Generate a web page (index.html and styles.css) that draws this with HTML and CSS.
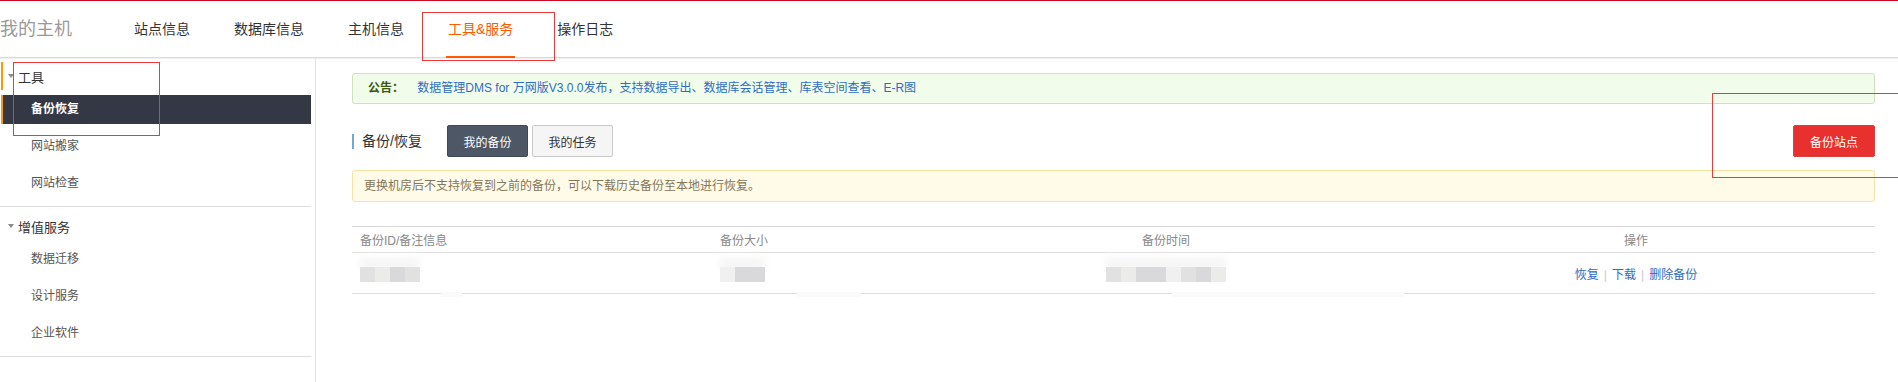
FILE: index.html
```html
<!DOCTYPE html>
<html lang="zh-CN">
<head>
    <meta charset="UTF-8">
    <meta name="viewport" content="width=device-width, initial-scale=1.0">
    <title>我的主机 - 工具&amp;服务</title>
    <link rel="stylesheet" href="styles.css">
</head>
<body>
    <div class="header">
        <div class="brand">我的主机</div>
        <ul class="nav">
            <li>站点信息</li>
            <li>数据库信息</li>
            <li>主机信息</li>
            <li class="active">工具&amp;服务</li>
            <li>操作日志</li>
        </ul>
    </div>

    <div class="layout">
        <aside class="sidebar">
            <div class="group current">
                <div class="group-title"><span class="caret"></span>工具</div>
                <a class="item active">备份恢复</a>
                <a class="item">网站搬家</a>
                <a class="item">网站检查</a>
            </div>
            <div class="group">
                <div class="group-title"><span class="caret"></span>增值服务</div>
                <a class="item">数据迁移</a>
                <a class="item">设计服务</a>
                <a class="item">企业软件</a>
            </div>
        </aside>

        <main class="content">
            <div class="notice">
                <b>公告：</b>
                <a>数据管理DMS for 万网版V3.0.0发布，支持数据导出、数据库会话管理、库表空间查看、E-R图</a>
            </div>

            <div class="section-bar">
                <h3 class="section-title">备份/恢复</h3>
                <div class="tabs">
                    <button class="tab active">我的备份</button>
                    <button class="tab">我的任务</button>
                </div>
                <button class="btn-danger">备份站点</button>
            </div>

            <div class="alert">更换机房后不支持恢复到之前的备份，可以下载历史备份至本地进行恢复。</div>

            <div class="table-wrap">
                <table class="backup-table">
                    <thead>
                        <tr>
                            <th class="col-id">备份ID/备注信息</th>
                            <th class="col-size">备份大小</th>
                            <th class="col-time">备份时间</th>
                            <th class="col-ops">操作</th>
                        </tr>
                    </thead>
                    <tbody>
                        <tr>
                            <td>
                                <span class="blur">
                                    <i class="b2"></i><i class="b3"></i><i class="b1"></i><i class="b2"></i>
                                </span>
                            </td>
                            <td>
                                <span class="blur">
                                    <i class="b4"></i><i class="b1"></i><i class="b1"></i>
                                </span>
                            </td>
                            <td class="center">
                                <span class="blur">
                                    <i class="b2"></i><i class="b3"></i><i class="b1"></i><i class="b1"></i><i class="b4"></i><i class="b2"></i><i class="b1"></i><i class="b3"></i>
                                </span>
                            </td>
                            <td class="center ops">
                                <a>恢复</a><span class="sep">|</span><a>下载</a><span class="sep">|</span><a>删除备份</a>
                            </td>
                        </tr>
                    </tbody>
                </table>
                <div class="smudge smudge-a"></div>
                <div class="smudge smudge-b"></div>
                <div class="smudge smudge-c"></div>
            </div>
        </main>
    </div>

    <!-- annotation boxes drawn over the screenshot -->
    <div class="mark mark-nav"></div>
    <div class="mark mark-side"></div>
    <div class="mark mark-btn"></div>
</body>
</html>
```

FILE: styles.css
```css
body {
    margin: 0;
    font-family: 'Liberation Sans', 'Noto Sans CJK SC', sans-serif;
    font-size: 12px;
    color: #333;
    background: #fff;
    overflow: hidden;
    height: 382px;
}

a {
    cursor: pointer;
}

/* header */

.header {
    display: flex;
    align-items: center;
    height: 56px;
    border-top: 1px solid #cc0a22;
    border-bottom: 1px solid #dadada;
    box-shadow: 0 1px 0 #f0f0f0;
}

.brand {
    font-size: 18px;
    color: #999;
    line-height: 56px;
    width: 72px;
}

.nav {
    display: flex;
    list-style: none;
    margin: 0 0 0 40px;
    padding: 0;
}

.nav li {
    position: relative;
    margin: 0 20px;
    padding: 0 2px;
    height: 56px;
    line-height: 56px;
    font-size: 14px;
    color: #333;
    cursor: pointer;
}

.nav li.active {
    color: #ff5a00;
}

.nav li.active::after {
    content: '';
    position: absolute;
    left: 0;
    right: 0;
    bottom: -1px;
    height: 2px;
    background: #ff5a00;
}

/* layout */

.layout {
    display: flex;
    height: 324px;
}

.sidebar {
    width: 311px;
    padding-right: 4px;
    border-right: 1px solid #e2e2e2;
    flex-shrink: 0;
}

.group {
    padding: 5px 0 8px;
    border-bottom: 1px solid #dedede;
}

.group:first-child {
    padding-top: 4px;
}

.group-title {
    display: flex;
    align-items: center;
    height: 28px;
    padding-left: 7px;
    font-size: 13px;
    color: #333;
    border-left: 2px solid transparent;
    margin-left: 1px;
}

.group.current .group-title {
    border-left-color: #f90;
}

.caret {
    width: 0;
    height: 0;
    border-left: 3px solid transparent;
    border-right: 3px solid transparent;
    border-top: 4px solid #8a8a8a;
    margin: 0 4px 0 -2px;
}

.item {
    display: block;
    height: 29px;
    line-height: 29px;
    margin-top: 8px;
    margin-left: 1px;
    padding-left: 28px;
    border-left: 2px solid transparent;
    color: #555;
    font-size: 12px;
}

.group-title + .item {
    margin-top: 5px;
}

.item.active {
    background: #333844;
    border-left-color: #f90;
    color: #fff;
    font-weight: bold;
}

/* content */

.content {
    flex: 1;
    padding: 15px 23px 0 36px;
}

.notice {
    height: 29px;
    line-height: 29px;
    padding-left: 15px;
    border: 1px solid #cfe3ba;
    border-radius: 3px;
    background: #f1fdea;
    margin-bottom: 21px;
}

.notice b {
    color: #3d5a12;
    margin-right: 10px;
}

.notice a {
    color: #2f6cc6;
}

.section-bar {
    display: flex;
    align-items: center;
    height: 32px;
    margin-bottom: 13px;
}

.section-title {
    margin: 0 25px 0 0;
    padding-left: 8px;
    border-left: 2px solid #6fa8d9;
    font-size: 14px;
    font-weight: normal;
    line-height: 15px;
    color: #333;
}

.tabs {
    display: flex;
    gap: 4px;
}

.tab {
    width: 81px;
    height: 32px;
    font-family: inherit;
    font-size: 12px;
    color: #333;
    background: #f5f5f5;
    border: 1px solid #c9c9c9;
    border-radius: 2px;
    cursor: pointer;
}

.tab.active {
    background: #4e5766;
    border-color: #404755;
    color: #fff;
}

.btn-danger {
    margin-left: auto;
    width: 82px;
    height: 32px;
    font-family: inherit;
    font-size: 12px;
    color: #fff;
    background: #e8302e;
    border: 1px solid #d9403d;
    border-radius: 2px;
    cursor: pointer;
}

.alert {
    height: 30px;
    line-height: 30px;
    padding-left: 11px;
    border: 1px solid #fae2a4;
    border-radius: 3px;
    background: #fffbe8;
    color: #857657;
    margin-bottom: 24px;
}

/* table */

.table-wrap {
    position: relative;
}

.backup-table {
    width: 100%;
    border-collapse: collapse;
    table-layout: fixed;
}

.backup-table th {
    height: 25px;
    padding: 0 8px;
    font-weight: normal;
    color: #888;
    text-align: left;
    border-top: 1px solid #d8d8d8;
    border-bottom: 1px solid #dedede;
}

.backup-table td {
    height: 40px;
    padding: 0 8px;
    border-bottom: 1px solid #dedede;
}

.col-id {
    width: 344px;
}

.col-size {
    width: 207px;
}

.col-time {
    width: 446px;
}

.backup-table th.col-time,
.backup-table th.col-ops,
.backup-table td.center {
    text-align: center;
}

.blur {
    display: inline-flex;
    vertical-align: middle;
    height: 15px;
    margin-top: 2px;
    box-shadow: 0 -10px 8px #f6f6f6;
}

.blur i {
    width: 15px;
    height: 15px;
}

.blur .b1 { background: #d9d9db; }
.blur .b2 { background: #e1e1e2; }
.blur .b3 { background: #ebebea; }
.blur .b4 { background: #f0f0f0; }

.ops a {
    color: #2f6cc6;
}

.ops .sep {
    color: #c8c8c8;
    margin: 0 5px;
}

.smudge {
    position: absolute;
    bottom: -3px;
    height: 5px;
    background: #fafafa;
}

.smudge-a { left: 89px; width: 21px; }
.smudge-b { left: 445px; width: 64px; }
.smudge-c { left: 820px; width: 232px; }

/* annotation marks */

.mark {
    position: absolute;
    border: 1px solid #ec3a3a;
}

.mark-nav {
    left: 422px;
    top: 12px;
    width: 131px;
    height: 47px;
}

.mark-side {
    left: 13px;
    top: 62px;
    width: 145px;
    height: 72px;
}

.mark-btn {
    left: 1712px;
    top: 93px;
    width: 200px;
    height: 83px;
}
```
